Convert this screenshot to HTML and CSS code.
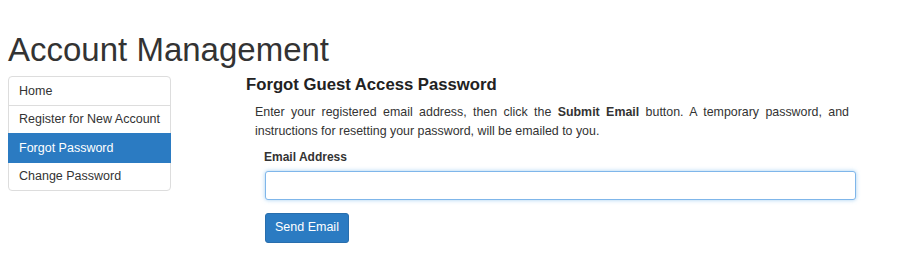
FILE: index.html
```
<!DOCTYPE html>
<html lang="en">
<head>
<meta charset="utf-8">
<title>Account Management</title>
<link rel="stylesheet" href="styles.css">
</head>
<body>
<h1 class="page-title">Account Management</h1>
<div class="layout">
  <nav class="side-nav">
    <a class="nav-item first" href="#">Home</a>
    <a class="nav-item" href="#">Register for New Account</a>
    <a class="nav-item active" href="#">Forgot Password</a>
    <a class="nav-item last" href="#">Change Password</a>
  </nav>
  <main class="content">
    <h4 class="section-title">Forgot Guest Access Password</h4>
    <p class="intro">Enter your registered email address, then click the <strong>Submit Email</strong> button. A temporary password, and instructions for resetting your password, will be emailed to you.</p>
    <form class="email-form">
      <label class="field-label" for="email">Email Address</label>
      <input class="field-input" id="email" type="email">
      <button class="send-btn" type="button">Send Email</button>
    </form>
  </main>
</div>
</body>
</html>
```
FILE: styles.css
```
html, body {
  margin: 0;
  padding: 0;
  background: #fff;
}
body {
  padding: 8px;
  font-family: "Liberation Sans", Arial, Helvetica, sans-serif;
  color: #333;
}
.page-title {
  margin: 24px 0 8px 0;
  font-size: 33px;
  line-height: 36px;
  font-weight: normal;
  color: #333;
}
.layout {
  display: flex;
  align-items: flex-start;
  gap: 75px;
}
.side-nav {
  width: 163px;
  flex: 0 0 163px;
  display: flex;
  flex-direction: column;
}
.nav-item {
  position: relative;
  display: block;
  padding: 6.5px 8px 6.5px 10px;
  font-size: 12.5px;
  line-height: 14.5px;
  white-space: nowrap;
  color: #333;
  text-decoration: none;
  border: 1px solid #ddd;
  margin-bottom: -1px;
  background: #fff;
}
.nav-item.first {
  border-radius: 4px 4px 0 0;
}
.nav-item.last {
  border-radius: 0 0 4px 4px;
  margin-bottom: 0;
}
.nav-item.active {
  z-index: 2;
  background: #2b7bc2;
  border-color: #2b7bc2;
  color: #fff;
}
.content {
  width: 620px;
}
.section-title {
  margin: 0;
  font-size: 16.7px;
  line-height: 18px;
  font-weight: bold;
  color: #222;
}
.intro {
  margin: 9px 0 0 0;
  padding: 0 17px 0 9px;
  font-size: 12.4px;
  line-height: 18.5px;
  text-align: justify;
  color: #333;
}
.intro strong {
  font-weight: bold;
}
.email-form {
  display: flex;
  flex-direction: column;
  align-items: flex-start;
  padding: 0 10px 0 19px;
  margin-top: 9px;
}
.field-label {
  font-size: 12px;
  line-height: 16px;
  font-weight: bold;
  color: #333;
  margin-left: -1px;
}
.field-input {
  box-sizing: border-box;
  width: 591px;
  height: 28.5px;
  margin: 6px 0 0 0;
  border: 1px solid #7fb6ea;
  border-radius: 3px;
  box-shadow: 0 0 4px rgba(102, 175, 233, 0.6);
  background: #fff;
  outline: none;
  padding: 4px 8px;
  font-family: inherit;
}
.send-btn {
  box-sizing: border-box;
  margin-top: 13.5px;
  height: 29.5px;
  padding: 0 9px;
  background: #2b7bc2;
  border: 1px solid #286ead;
  border-radius: 3px;
  color: #fff;
  font-family: inherit;
  font-size: 12.5px;
  line-height: 27px;
  cursor: pointer;
}
```
